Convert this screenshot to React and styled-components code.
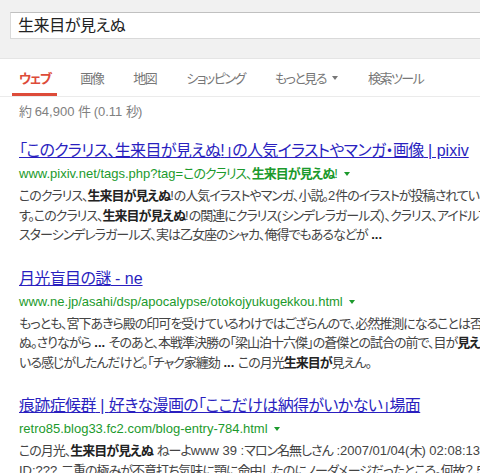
import React from "react";
import styled, { createGlobalStyle } from "styled-components";

const Global = createGlobalStyle`
  html, body { margin: 0; padding: 0; background: #fff; overflow: hidden; }
  body {
    font-family: Arial, "Liberation Sans", "Noto Sans CJK JP", sans-serif;
    font-feature-settings: "palt";
  }
`;

const Page = styled.div`
  width: 480px;
  height: 473px;
  overflow: hidden;
`;

const Cj = styled.span`
  letter-spacing: var(--cjk-ls, -1px);
`;

const CJK = /([\u3000-\u30ff\u3400-\u9fff\uff00-\uffef]+)/;
const jp = (str) =>
  str.split(CJK).map((s, i) => (i % 2 ? <Cj key={i}>{s}</Cj> : s));

const renderSegs = (segs) =>
  segs.map((s, i) =>
    typeof s === "string" ? (
      <React.Fragment key={i}>{jp(s)}</React.Fragment>
    ) : (
      <b key={i}>{jp(s.b)}</b>
    )
  );

const Header = styled.div`
  height: 59px;
  background: #f1f1f1;
  border-bottom: 1px solid #e5e5e5;
  padding: 12px 0 0 10px;
  box-sizing: border-box;
`;

const SearchBox = styled.div`
  --cjk-ls: -0.4px;
  width: 520px;
  height: 27px;
  box-sizing: border-box;
  background: #fff;
  border: 1px solid #d9d9d9;
  border-top-color: #c0c0c0;
  padding-left: 7px;
  font-size: 16px;
  line-height: 25px;
  color: #222;
`;

const Tabs = styled.div`
  --cjk-ls: -1.5px;
  display: flex;
  height: 37px;
  padding-left: 12px;
  gap: 16px;
  border-bottom: 1px solid #ebebeb;
`;

const Tab = styled.div`
  display: flex;
  align-items: center;
  gap: 6px;
  padding: 3px 7px 0;
  font-size: 13px;
  color: ${(p) => (p.$active ? "#dd4b39" : "#777")};
  font-weight: ${(p) => (p.$active ? "bold" : "normal")};
  border-bottom: 3px solid ${(p) => (p.$active ? "#dd4b39" : "transparent")};
`;

const Caret = styled.span`
  width: 0;
  height: 0;
  border-left: 3px solid transparent;
  border-right: 3px solid transparent;
  border-top: 4px solid ${(p) => p.$color || "#777"};
  display: inline-block;
`;

const Main = styled.div`
  padding-left: 19px;
`;

const Stats = styled.div`
  margin-top: 6px;
  font-size: 13px;
  line-height: 18px;
  color: #808080;
  margin-bottom: 19px;
`;

const Result = styled.div`
  margin-bottom: 23px;
  white-space: nowrap;
`;

const Title = styled.a`
  --cjk-ls: -0.65px;
  display: inline-block;
  font-size: 16px;
  line-height: 22px;
  color: #2a1fbf;
  text-decoration: underline;
  text-underline-offset: 1px;
  margin-bottom: 1px;
`;

const Url = styled.div`
  font-size: 13px;
  line-height: 22px;
  color: #1c9a2c;
  display: flex;
  align-items: center;
  gap: 6px;
  b { font-weight: bold; }
`;

const Snippet = styled.div`
  margin-top: 1px;
  font-size: 13px;
  line-height: 19.5px;
  color: #444;
  b { color: #222; font-weight: bold; }
`;

const Line = styled.div`
  white-space: nowrap;
`;

const results = [
  {
    title: "「このクラリス、生来目が見えぬ!」の人気イラストやマンガ・画像 | pixiv",
    url: ["www.pixiv.net/tags.php?tag=このクラリス、", { b: "生来目が見えぬ" }, "!"],
    lines: [
      ["このクラリス、", { b: "生来目が見えぬ" }, "!の人気イラストやマンガ、小説。2件のイラストが投稿されていま"],
      ["す。このクラリス、", { b: "生来目が見えぬ" }, "!の関連にクラリス(シンデレラガールズ)、クラリス、アイドルマ"],
      ["スターシンデレラガールズ、実は乙女座のシャカ、俺得でもあるなどが ", { b: "..." }],
    ],
  },
  {
    title: "月光盲目の謎 - ne",
    url: ["www.ne.jp/asahi/dsp/apocalypse/otokojyukugekkou.html"],
    lines: [
      ["もっとも、宮下あきら殿の印可を受けているわけではござらんので、必然推測になることは否めま"],
      ["ぬ。さりながら ", { b: "..." }, " そのあと、本戦準決勝の「梁山泊十六傑」の蒼傑との試合の前で、目が", { b: "見え" }, "て"],
      ["いる感じがしたんだけど。「チャク家纏劾 ", { b: "..." }, " この月光", { b: "生来目が" }, "見えん。"],
    ],
  },
  {
    title: "痕跡症候群 | 好きな漫画の「ここだけは納得がいかない」場面",
    url: ["retro85.blog33.fc2.com/blog-entry-784.html"],
    lines: [
      ["この月光、", { b: "生来目が見えぬ" }, " ねーよwww 39 :マロン名無しさん :2007/01/04(木) 02:08:13"],
      ["ID:??? 二重の極みが不意打ち気味に顎に命中したのにノーダメージだったところ。何故？ 50"],
    ],
  },
];

const tabs = ["ウェブ", "画像", "地図", "ショッピング", "もっと見る", "検索ツール"];

export default function App() {
  return (
    <Page>
      <Global />
      <Header>
        <SearchBox>{jp("生来目が見えぬ")}</SearchBox>
      </Header>
      <Tabs>
        {tabs.map((t, i) => (
          <Tab key={t} $active={i === 0}>
            <span>{jp(t)}</span>
            {t === "もっと見る" && <Caret />}
          </Tab>
        ))}
      </Tabs>
      <Main>
        <Stats>{jp("約 64,900 件 (0.11 秒)")}</Stats>
        {results.map((r, i) => (
          <Result key={i}>
            <Title href="#">{jp(r.title)}</Title>
            <Url>
              <span>{renderSegs(r.url)}</span>
              <Caret $color="#1c9a2c" />
            </Url>
            <Snippet>
              {r.lines.map((l, j) => (
                <Line key={j}>{renderSegs(l)}</Line>
              ))}
            </Snippet>
          </Result>
        ))}
      </Main>
    </Page>
  );
}
